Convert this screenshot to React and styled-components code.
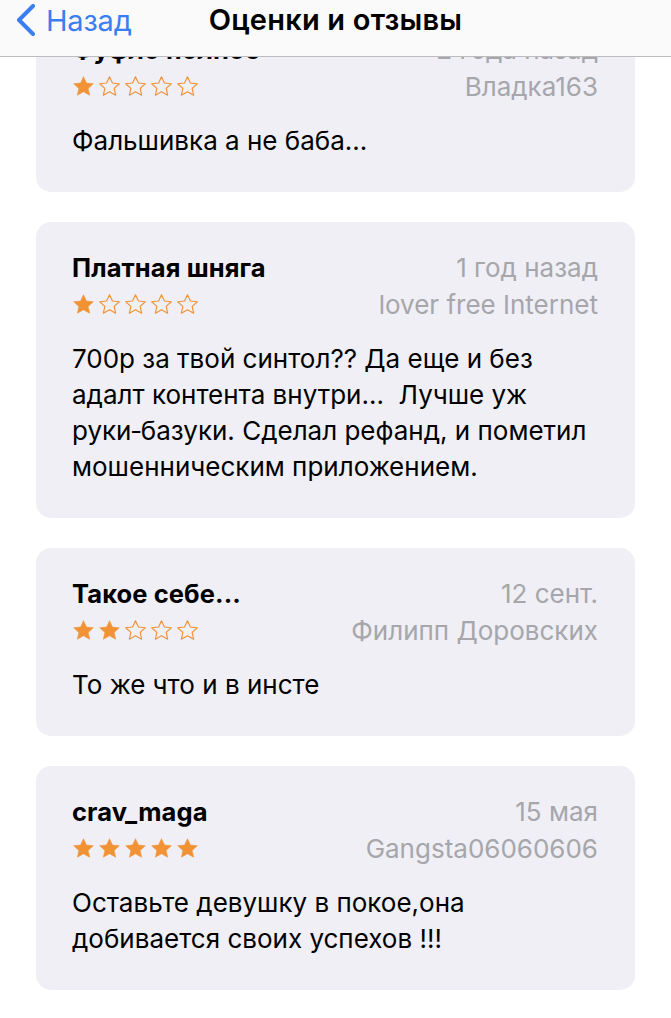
import React from "react"
import styled, { createGlobalStyle } from "styled-components"

const GlobalStyle = createGlobalStyle`
  html, body {
    margin: 0;
    padding: 0;
    background: #fff;
  }
  body {
    font-family: Inter, "Noto Sans", "Liberation Sans", sans-serif;
    -webkit-font-smoothing: antialiased;
  }
`

const Page = styled.div`
  width: 671px;
  min-height: 1018px;
  background: #fff;
  overflow: hidden;
`

const NavBar = styled.header`
  position: fixed;
  top: 0;
  left: 0;
  right: 0;
  height: 56px;
  z-index: 10;
  background: #fafafa;
  border-bottom: 1px solid #bcbcbf;
  display: flex;
  align-items: center;
  justify-content: center;
`

const BackButton = styled.div`
  position: absolute;
  left: 15px;
  top: 0;
  height: 40px;
  display: flex;
  align-items: center;
  gap: 9px;
  color: #3a7ff2;
  font-size: 29px;
  letter-spacing: -0.2px;
`

const NavTitle = styled.h1`
  margin: 0 0 17px;
  font-size: 29px;
  font-weight: 600;
  color: #000;
  letter-spacing: 0.2px;
`

const List = styled.main`
  display: flex;
  flex-direction: column;
  gap: 30px;
  padding: 4px 36px 30px;
`

const Card = styled.article`
  background: #efeff5;
  border-radius: 15px;
  padding: 27px 18px 33px 36px;
`

const CardHead = styled.div`
  display: grid;
  grid-template-columns: 1fr auto;
  grid-auto-rows: 37px;
  align-items: center;
  column-gap: 12px;
  padding-right: 19px;
`

const Title = styled.div`
  font-size: 25.5px;
  font-weight: 700;
  color: #000;
  letter-spacing: 0.1px;
  white-space: nowrap;
`

const Meta = styled.div`
  font-size: 26px;
  color: #a6a6ab;
  text-align: right;
  white-space: nowrap;
`

const Stars = styled.div`
  display: flex;
  gap: 3px;
`

const Body = styled.p`
  margin: 18px 0 0;
  padding-right: 12px;
  font-size: 26px;
  line-height: 36px;
  color: #000;
  white-space: pre-wrap;
`

const STAR = "M12 1.8l3.05 6.6 7.2.75-5.4 4.85 1.55 7.1L12 17.45 5.6 21.1l1.55-7.1-5.4-4.85 7.2-.75z"

const Star = ({ filled }) => (
  <svg width="23" height="23" viewBox="0 0 24 24">
    <path
      d={STAR}
      fill={filled ? "#f19235" : "none"}
      stroke="#f19235"
      strokeWidth={filled ? 0.6 : 1.2}
      strokeLinejoin="round"
    />
  </svg>
)

const Rating = ({ value }) => (
  <Stars>
    {[1, 2, 3, 4, 5].map(i => <Star key={i} filled={i <= value} />)}
  </Stars>
)

const reviews = [
  { title: "Фуфло полное", date: "2 года назад", author: "Владка163", rating: 1, text: "Фальшивка а не баба..." },
  {
    title: "Платная шняга",
    date: "1 год назад",
    author: "lover free Internet",
    rating: 1,
    text: "700р за твой синтол?? Да еще и без адалт контента внутри...  Лучше уж руки\u2011базуки. Сделал рефанд, и пометил мошенническим приложением."
  },
  { title: "Такое себе...", date: "12 сент.", author: "Филипп Доровских", rating: 2, text: "То же что и в инсте" },
  { title: "crav_maga", date: "15 мая", author: "Gangsta06060606", rating: 5, text: "Оставьте девушку в покое,она добивается своих успехов !!!" }
]

const App = () => (
  <Page>
    <GlobalStyle />
    <NavBar>
      <BackButton>
        <svg width="22" height="32" viewBox="0 0 22 32">
          <path d="M18 2L4 16l14 14" fill="none" stroke="#3a7ff2" strokeWidth="4" strokeLinecap="round" strokeLinejoin="round" />
        </svg>
        Назад
      </BackButton>
      <NavTitle>Оценки и отзывы</NavTitle>
    </NavBar>
    <List>
      {reviews.map(r => (
        <Card key={r.author}>
          <CardHead>
            <Title>{r.title}</Title>
            <Meta>{r.date}</Meta>
            <Rating value={r.rating} />
            <Meta>{r.author}</Meta>
          </CardHead>
          <Body>{r.text}</Body>
        </Card>
      ))}
    </List>
  </Page>
)

export default App
